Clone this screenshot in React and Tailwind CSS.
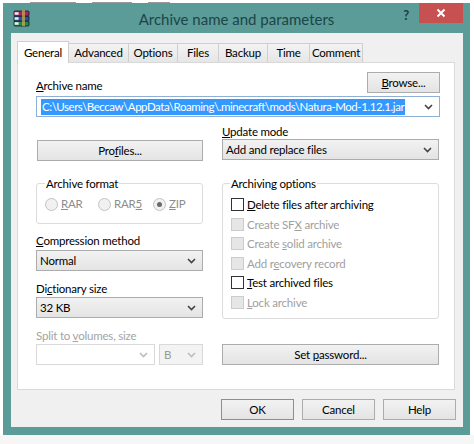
import React from "react";

function Chevron({ color = "#444" }) {
  return (
    <svg width="9" height="6" viewBox="0 0 9 6" className="shrink-0">
      <path d="M1 1l3.5 3.5L8 1" fill="none" stroke={color} strokeWidth="1.6" />
    </svg>
  );
}

function RarIcon() {
  return (
    <svg width="17" height="18" viewBox="0 0 17 18">
      <rect x="1" y="12" width="15" height="5" rx="1" fill="#1e8a4c" stroke="#1b1b1b" strokeWidth="0.8" />
      <rect x="1.6" y="13.2" width="4" height="2.6" fill="#e8f0ea" />
      <rect x="1" y="7" width="15" height="5" rx="1" fill="#2f4fa3" stroke="#1b1b1b" strokeWidth="0.8" />
      <rect x="1.6" y="8.2" width="4" height="2.6" fill="#e6ecf7" />
      <rect x="1" y="2" width="15" height="5" rx="1" fill="#9a2a66" stroke="#1b1b1b" strokeWidth="0.8" />
      <rect x="1.6" y="3.2" width="4" height="2.6" fill="#f3e4ec" />
      <rect x="9" y="1" width="3" height="16" fill="#c9a74a" opacity="0.75" />
    </svg>
  );
}

function Btn({ children, className = "", def = false }) {
  return (
    <div
      className={
        "h-[21px] flex items-center justify-center border bg-linear-to-b from-[#f2f2f2] to-[#e4e4e4] text-black " +
        (def ? "border-[#5b9bd5] " : "border-[#acacac] ") +
        className
      }
    >
      {children}
    </div>
  );
}

function Select({ children, className = "" }) {
  return (
    <div
      className={
        "h-[21px] flex items-center justify-between pl-[3px] pr-[6px] border border-[#acacac] bg-linear-to-b from-[#f2f2f2] to-[#e4e4e4] text-black " +
        className
      }
    >
      <span>{children}</span>
      <Chevron />
    </div>
  );
}

function Radio({ label, checked, className = "" }) {
  return (
    <div className={"flex items-center gap-[3px] " + className}>
      <div className="w-[13px] h-[13px] rounded-full border border-[#c2c2c2] bg-[#f1f1f1] flex items-center justify-center">
        {checked && <div className="w-[5px] h-[5px] rounded-full bg-[#6a6a6a]" />}
      </div>
      <span className="text-[#8c8c8c]">{label}</span>
    </div>
  );
}

function Check({ label, disabled }) {
  return (
    <div className="h-[19.5px] flex items-center gap-[3px]">
      <div
        className={
          "w-[13px] h-[13px] border " +
          (disabled ? "border-[#cccccc] bg-[#e6e6e6]" : "border-[#333333] bg-white")
        }
      />
      <span className={disabled ? "text-[#a0a0a0]" : "text-black"}>{label}</span>
    </div>
  );
}

const tabs = [
  { name: "Advanced", w: "w-[61px]" },
  { name: "Options", w: "w-[50px]" },
  { name: "Files", w: "w-[42px]" },
  { name: "Backup", w: "w-[50px]" },
  { name: "Time", w: "w-[43px]" },
  { name: "Comment", w: "w-[54px]" },
];

export default function App() {
  return (
    <div className="w-[474px] h-[444px] overflow-hidden bg-[#f6f6f6] flex flex-col font-['Lato',sans-serif] text-[11.5px] tracking-[-0.2px] text-black">
      {/* bits of the window behind */}
      <div className="h-[3px] bg-white flex items-end gap-[16px] pl-[30px]">
        <div className="w-[46px] h-[1px] bg-[#9a9a9a]" />
        <div className="w-[40px] h-[1px] bg-[#9a9a9a]" />
        <div className="w-[22px] h-[1px] bg-[#9a9a9a]" />
      </div>

      <div className="flex">
        <div className="w-[3px] bg-white" />
        <div className="w-[467px] h-[432px] bg-[#5b9c99] flex flex-col">
          {/* title bar */}
          <div className="h-[30px] grid grid-cols-[1fr_auto_1fr]">
            <div className="pl-[10px] pt-[6px]">
              <RarIcon />
            </div>
            <div className="pt-[6px] text-[15px] tracking-normal leading-[20px] text-[#1b4547]">
              Archive name and parameters
            </div>
            <div className="flex justify-end items-start">
              <span className="mt-[5px] mr-[10px] text-[13px] font-bold text-[#1f3a45] leading-[14px]">?</span>
              <div className="w-[44px] h-[20px] mr-[7px] bg-[#c75050] flex items-center justify-center">
                <svg width="10" height="10" viewBox="0 0 10 10">
                  <path d="M1.5 1.5l7 7M8.5 1.5l-7 7" stroke="#fff" strokeWidth="2" />
                </svg>
              </div>
            </div>
          </div>

          {/* client area */}
          <div className="ml-[8px] mr-[7px] h-[394px] bg-[#f0f0f0] pt-[8px] pl-[6px]">
            {/* tabs */}
            <div className="flex items-end h-[21px]">
              <div className="w-[52px] h-[22px] -mb-[1px] relative z-10 bg-white border border-b-0 border-[#cfcfcf] flex items-start justify-center pt-[2px]">
                General
              </div>
              {tabs.map((t) => (
                <div
                  key={t.name}
                  className={
                    t.w +
                    " h-[19px] -ml-[1px] border border-b-0 border-[#cfcfcf] bg-linear-to-b from-[#f3f3f3] to-[#e6e6e6] flex items-center justify-center"
                  }
                >
                  {t.name}
                </div>
              ))}
            </div>

            {/* panel */}
            <div className="w-[438px] h-[328px] border border-[#d9d9d9] bg-white pt-[9px] pl-[18px] pr-[14px]">
              <div className="flex items-end justify-between h-[21px]">
                <span className="leading-[15px]">
                  <span className="underline">A</span>rchive name
                </span>
                <Btn className="w-[73px]">
                  <span>
                    <span className="underline">B</span>rowse...
                  </span>
                </Btn>
              </div>

              <div className="mt-[3px] h-[21px] border border-[#8fb0d6] bg-white flex items-center justify-between pl-[4px] pr-[6px]">
                <span className="bg-[#3399ff] text-white leading-[16px] px-[1px] whitespace-nowrap tracking-[-0.45px]">
                  {"C:\\Users\\Beccaw\\AppData\\Roaming\\.minecraft\\mods\\Natura-Mod-1.12.1.jar"}
                </span>
                <Chevron />
              </div>

              <div className="mt-[7px] flex gap-[19px]">
                <div className="w-[167px] pt-[16px] pl-[1px]">
                  <Btn className="w-[166px]">
                    <span>
                      Pro<span className="underline">f</span>iles...
                    </span>
                  </Btn>
                </div>
                <div className="w-[217px]">
                  <div className="leading-[15px]">
                    <span className="underline">U</span>pdate mode
                  </div>
                  <Select>Add and replace files</Select>
                </div>
              </div>

              <div className="mt-[22px] flex gap-[19px]">
                {/* left column */}
                <div className="w-[167px]">
                  <div className="h-[41px] border border-[#dcdcdc] rounded-[3px]">
                    <div className="-mt-[8px] ml-[8px] w-fit bg-white px-[1px] leading-[15px]">
                      Archive format
                    </div>
                    <div className="mt-[6px] pl-[8px] flex items-center h-[14px]">
                      <Radio
                        className="w-[53px]"
                        label={
                          <span>
                            <span className="underline">R</span>AR
                          </span>
                        }
                      />
                      <Radio
                        className="w-[55px]"
                        label={
                          <span>
                            RAR<span className="underline">5</span>
                          </span>
                        }
                      />
                      <Radio
                        checked
                        label={
                          <span>
                            <span className="underline">Z</span>IP
                          </span>
                        }
                      />
                    </div>
                  </div>

                  <div className="mt-[9px] leading-[15px]">
                    <span className="underline">C</span>ompression method
                  </div>
                  <Select className="mt-[2px]">Normal</Select>

                  <div className="mt-[10px] leading-[15px]">
                    Di<span className="underline">c</span>tionary size
                  </div>
                  <Select className="mt-[1px]">32 KB</Select>

                  <div className="mt-[10px] leading-[15px] text-[#a3a3a3]">
                    Split to <span className="underline">v</span>olumes, size
                  </div>
                  <div className="mt-[1px] flex gap-[4px]">
                    <div className="w-[119px] h-[21px] border border-[#d9d9d9] bg-white flex items-center justify-end pr-[6px]">
                      <Chevron color="#bdbdbd" />
                    </div>
                    <div className="w-[44px] h-[21px] border border-[#d9d9d9] bg-[#f3f3f3] flex items-center justify-between pl-[4px] pr-[6px] text-[#9a9a9a]">
                      <span>B</span>
                      <Chevron color="#bdbdbd" />
                    </div>
                  </div>
                </div>

                {/* right column */}
                <div className="w-[217px]">
                  <div className="h-[136px] border border-[#dcdcdc] rounded-[3px]">
                    <div className="-mt-[8px] ml-[7px] w-fit bg-white px-[1px] leading-[15px]">
                      Archiving options
                    </div>
                    <div className="mt-[4px] pl-[8px]">
                      <Check
                        label={
                          <span>
                            <span className="underline">D</span>elete files after archiving
                          </span>
                        }
                      />
                      <Check
                        disabled
                        label={
                          <span>
                            Create SF<span className="underline">X</span> archive
                          </span>
                        }
                      />
                      <Check
                        disabled
                        label={
                          <span>
                            Create <span className="underline">s</span>olid archive
                          </span>
                        }
                      />
                      <Check
                        disabled
                        label={
                          <span>
                            Add r<span className="underline">e</span>covery record
                          </span>
                        }
                      />
                      <Check
                        label={
                          <span>
                            <span className="underline">T</span>est archived files
                          </span>
                        }
                      />
                      <Check
                        disabled
                        label={
                          <span>
                            <span className="underline">L</span>ock archive
                          </span>
                        }
                      />
                    </div>
                  </div>
                  <Btn className="mt-[25px] w-[217px]">
                    <span>
                      Set <span className="underline">p</span>assword...
                    </span>
                  </Btn>
                </div>
              </div>
            </div>

            {/* dialog buttons */}
            <div className="mt-[9px] pr-[7px] flex justify-end gap-[8px]">
              <Btn def className="w-[73px]">OK</Btn>
              <Btn className="w-[73px]">Cancel</Btn>
              <Btn className="w-[73px]">Help</Btn>
            </div>
          </div>
        </div>
        <div className="flex-1 bg-white" />
      </div>
    </div>
  );
}
